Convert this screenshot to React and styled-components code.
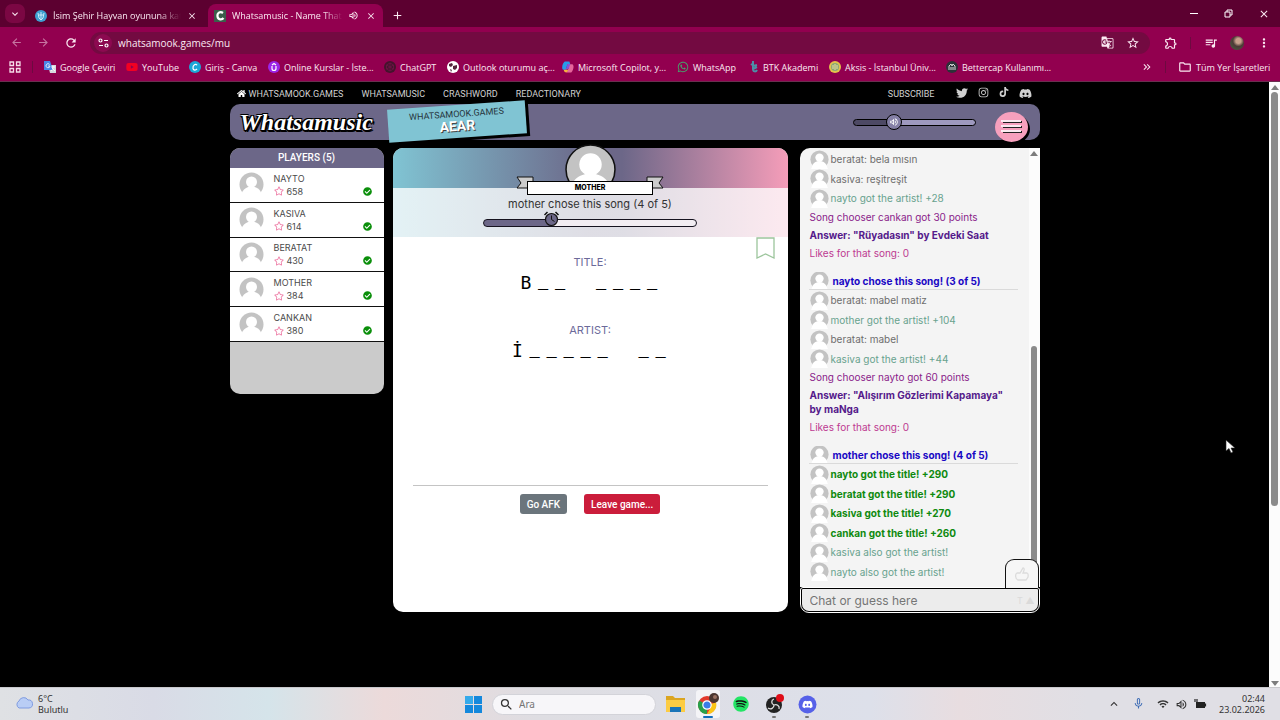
import React from "react";
import styled, { createGlobalStyle, css } from "styled-components";
import {
  MdArrowBack, MdArrowForward, MdRefresh, MdStarBorder, MdOutlineExtension, MdQueueMusic, MdMoreVert,
  MdClose, MdAdd, MdExpandMore, MdExpandLess, MdGTranslate, MdOutlineFolder, MdOutlineVolumeUp,
  MdWifi, MdMicNone, MdSearch, MdKeyboardDoubleArrowRight,
} from "react-icons/md";
import { FaHome, FaTwitter, FaInstagram, FaTiktok, FaDiscord, FaSpotify, FaWhatsapp, FaYoutube, FaRegStar, FaCheckCircle } from "react-icons/fa";

const GlobalStyle = createGlobalStyle`
  * { box-sizing: border-box; }
  body { margin: 0; background: #000; font-family: Inter, "Liberation Sans", sans-serif; }
  button, input { font: inherit; color: inherit; margin: 0; }
  button { border: 0; padding: 0; background: none; display: flex; align-items: center; justify-content: center; }
  a { color: inherit; text-decoration: none; }
  p, ul, h1, h2 { margin: 0; padding: 0; font: inherit; list-style: none; }
  svg { display: block; flex: none; }
`;

const Desktop = styled.div`
  min-height: 100vh;
  display: flex;
  flex-direction: column;
  overflow: hidden;
`;

/* ---------- browser ---------- */
const Chrome = styled.header`
  font-family: "Open Sans", "Noto Sans", sans-serif;
  color: #fbe9f2;
  background: #92004f;
  border-bottom: 1px solid #6a3050;
`;
const TabStrip = styled.div`
  display: flex;
  align-items: flex-end;
  height: 27px;
  padding-left: 5px;
  background: #5c0030;
`;
const TabMenu = styled.button`
  width: 20px;
  height: 19px;
  margin-bottom: 4px;
  border-radius: 7px;
  background: #7b0743;
`;
const Tab = styled.div`
  display: flex;
  align-items: center;
  gap: 4px;
  height: 23px;
  width: ${(p) => (p.$active ? 175 : 183)}px;
  padding: 0 ${(p) => (p.$active ? 6 : 10)}px;
  border-radius: 8px 8px 0 0;
  font-size: 9px;
  font-weight: 500;
  background: ${(p) => (p.$active ? "#92004f" : "transparent")};
`;
const TabTitle = styled.span`
  flex: 1;
  padding-left: 2px;
  overflow: hidden;
  white-space: nowrap;
  mask-image: linear-gradient(90deg, #000 82%, transparent);
`;
const NewTab = styled.button`
  width: 28px;
  height: 23px;
`;
const WindowButtons = styled.div`
  display: flex;
  gap: 22px;
  height: 27px;
  align-items: center;
  margin-left: auto;
  padding-right: 10px;
`;
const Toolbar = styled.div`
  display: flex;
  align-items: center;
  height: 31px;
  padding: 0 10px;
`;
const NavButtons = styled.div`
  display: flex;
  gap: 14px;
  width: 80px;
`;
const ToolButton = styled.button`
  width: 13px;
  opacity: ${(p) => (p.$dim ? 0.5 : 1)};
`;
const Address = styled.div`
  flex: 1;
  display: flex;
  align-items: center;
  gap: 6px;
  height: 22px;
  padding: 0 11px 0 4px;
  border-radius: 11px;
  background: #730a41;
`;
const PageActions = styled.div`
  display: flex;
  gap: 12px;
`;
const SiteInfo = styled.button`
  width: 18px;
  height: 18px;
  border-radius: 9px;
  background: #8c0a50;
`;
const Url = styled.input`
  flex: 1;
  border: 0;
  padding: 0;
  background: none;
  font-size: 10px;
  font-weight: 500;
  outline: 0;
`;
const ToolbarEnd = styled.div`
  display: flex;
  align-items: center;
  gap: 13px;
  padding-left: 14px;
`;
const Rule = styled.span`
  width: 1px;
  height: 12px;
  background: #6d0a40;
`;
const Photo = styled.span`
  width: 14px;
  height: 14px;
  border-radius: 50%;
  background: radial-gradient(circle at 60% 35%, #c9a08c 20%, #4c3a36 45%, #49553f 80%);
`;
const Bookmarks = styled.nav`
  display: flex;
  align-items: center;
  height: 23px;
  padding: 0 11px 5px 9px;
  font-size: 9px;
  font-weight: 500;
  white-space: nowrap;
`;
const BookmarkLead = styled.div`
  display: flex;
  align-items: center;
  gap: 11px;
  width: 35px;
`;
const Bookmark = styled.a`
  display: flex;
  align-items: center;
  gap: 4px;
  width: ${(p) => p.$w}px;
`;
const BookmarkEnd = styled.div`
  display: flex;
  align-items: center;
  gap: 12px;
  margin-left: auto;
`;

/* ---------- page ---------- */
const Viewport = styled.div`
  flex: 1;
  display: flex;
  background: #000;
`;
const PageScroll = styled.div`
  width: 11px;
  display: flex;
  flex-direction: column;
  align-items: center;
  justify-content: space-between;
  padding: 3px 0 1px;
  background: #fcfcfc;
`;
const PageThumb = styled.span`
  flex: 0 0 414px;
  width: 7px;
  margin: 2px 0 auto;
  border-radius: 4px;
  background: #8b8b8b;
`;
const Arrow = styled.span`
  border: 4px solid transparent;
  border-top-width: ${(p) => (p.$down ? 5 : 0)}px;
  border-bottom-width: ${(p) => (p.$down ? 0 : 5)}px;
  ${(p) => (p.$down ? "border-top-color" : "border-bottom-color")}: #7d7d7d;
`;
const Game = styled.main`
  width: 64%;
  max-width: 810px;
  min-width: 760px;
  margin: 0 auto;
`;
const SiteNav = styled.nav`
  display: flex;
  align-items: center;
  height: 22px;
  padding: 1px 8px 0 7px;
  gap: 18px;
  font: 400 9px Roboto, sans-serif;
  color: #d0d0d0;
`;
const HomeLink = styled.a`
  display: flex;
  align-items: center;
  gap: 3px;
`;
const Social = styled.div`
  display: flex;
  gap: 10px;
  padding-left: 3px;
`;
const Push = styled.a`
  margin-left: auto;
`;
const Banner = styled.header`
  display: flex;
  align-items: center;
  height: 36px;
  margin-bottom: 8px;
  padding: 0 12px 0 10px;
  border-radius: 10px;
  background: #6c6788;
`;
const Logo = styled.h1`
  width: 148px;
  font: italic 700 24px "Liberation Serif", serif;
  color: #fff;
  text-shadow: 1px 1px 0 #000, -1px -1px 0 #000, 1px -1px 0 #000, -1px 1px 0 #000, 2px 2px 0 #000, 0 2px 0 #000;
`;
const RoomCard = styled.div`
  width: 138px;
  height: 33px;
  margin-bottom: 2px;
  padding-top: 4px;
  text-align: center;
  background: #80c4d3;
  box-shadow: 3px 3px 0 #000;
  transform: rotate(-4deg);
  font: 400 9px/11px Roboto, sans-serif;
  color: #26343c;
`;
const RoomCode = styled.strong`
  display: block;
  font: 700 14px/13px Roboto, sans-serif;
  color: #fff;
  text-shadow: 1px 1px 0 #444;
`;
const Volume = styled.label`
  position: relative;
  display: flex;
  align-items: center;
  margin-left: auto;
  width: 123px;
`;
const VolumeInput = styled.input`
  appearance: none;
  width: 100%;
  height: 7px;
  border: 1px solid #000;
  border-radius: 4px;
  background: linear-gradient(90deg, #4d4964 33%, #9e99bf 33%);
  &::-webkit-slider-thumb {
    appearance: none;
    width: 16px;
    height: 16px;
    border: 1px solid #000;
    border-radius: 50%;
    background: #8580a6;
  }
`;
const VolumeGlyph = styled.span`
  position: absolute;
  left: 36px;
  pointer-events: none;
  color: #fff;
`;
const MenuButton = styled.button`
  width: 33px;
  height: 30px;
  margin: 9px 0 0 19px;
  border-radius: 50%;
  background: #f7a0bd;
  box-shadow: 2px 2px 0 #000;
`;
const Columns = styled.div`
  display: grid;
  grid-template-columns: 154px minmax(0, 1fr) 240px;
  align-items: start;
  column-gap: 12px;
`;
const Players = styled.section`
  min-height: 246px;
  border-radius: 10px;
  overflow: hidden;
  background: #cbcbcb;
`;
const PlayersTitle = styled.h2`
  height: 20px;
  background: #6c6788;
  color: #fff;
  text-align: center;
  font: 500 10px/20px Roboto, sans-serif;
`;
const PlayerList = styled.ul`
  display: flex;
  flex-direction: column;
  height: 174px;
`;
const Player = styled.li`
  flex: 1;
  display: flex;
  align-items: center;
  gap: 10px;
  padding: 0 12px 0 9px;
  border-bottom: 1px solid #111;
  background: #fff;
  font-size: 9px;
  color: #4a4a4a;
`;
const PlayerText = styled.div`
  flex: 1;
  line-height: 13px;
`;
const Score = styled.div`
  display: flex;
  align-items: center;
  justify-content: space-between;
`;
const ScoreValue = styled.span`
  display: flex;
  align-items: center;
  gap: 3px;
`;

/* ---------- round panel ---------- */
const Round = styled.section`
  min-height: 464px;
  margin-left: -3px;
  border-radius: 10px;
  background: #fff;
  text-align: center;
`;
const spectrum = css`linear-gradient(90deg, #80c4d3, #6c6788 50%, #6c6788 58%, #f59db9)`;
const RoundTop = styled.div`
  height: 89px;
  display: flex;
  flex-direction: column;
  align-items: center;
  border-radius: 10px 10px 0 0;
  background: linear-gradient(transparent 40px, rgba(255, 255, 255, 0.78) 40px), ${spectrum};
  font-size: 11px;
  color: #333;
`;
const Host = styled.div`
  position: relative;
  display: flex;
  flex-direction: column;
  align-items: center;
  width: 148px;
  margin-top: -4px;
`;
const HostPicture = styled.div`
  height: 37px;
  overflow: hidden;
`;
const Ribbon = styled.svg`
  position: absolute;
  left: 0;
  top: 32px;
`;
const HostName = styled.div`
  position: relative;
  width: 126px;
  height: 14px;
  border: 1px solid #000;
  background: #fff;
  color: #000;
  font: 800 7px/12px Inter, sans-serif;
`;
const Timer = styled.div`
  position: relative;
  width: 214px;
  height: 8px;
  margin-top: 8px;
  border: 1px solid #16131f;
  border-radius: 4px;
  background: linear-gradient(90deg, #6c6788 32%, #f2edf2 32%);
`;
const Clock = styled.svg`
  position: absolute;
  left: 59px;
  top: -9px;
`;
const HostCaption = styled.p`
  margin-top: 2px;
  line-height: 14px;
`;
const Answer = styled.div`
  height: 68px;
`;
const Answers = styled.div`
  position: relative;
  padding-top: 17px;
  height: 249px;
  margin: 0 20px;
  border-bottom: 1px solid #c4c4c4;
`;
const Save = styled.button`
  position: absolute;
  right: -7px;
  top: 0;
`;
const AnswerLabel = styled.h2`
  font-size: 11px;
  line-height: 16px;
  color: #6c6a9a;
`;
const Letters = styled.div`
  display: flex;
  justify-content: center;
  margin-top: 3px;
  padding-right: 2px;
  font: 18px/20px "DejaVu Sans Mono", monospace;
  color: #000;
`;
const Cell = styled.span`
  width: ${(p) => (p.$gap ? 24 : 17)}px;
  ${(p) => p.$blank && "padding-top: 1px; font-family: 'Liberation Mono', monospace; font-size: 17px;"}
`;
const Actions = styled.div`
  display: flex;
  justify-content: center;
  gap: 17px;
  padding-top: 8px;
`;
const Action = styled.button`
  height: 20px;
  padding: 0 7px;
  border-radius: 3px;
  font: 500 10px Roboto, sans-serif;
  color: #fff;
  background: ${(p) => (p.$danger ? "#cb1d3b" : "#6b757c")};
`;

/* ---------- chat ---------- */
const Chat = styled.section`
  position: relative;
`;
const ChatLog = styled.div`
  display: flex;
  height: 439px;
  border-radius: 10px 0 0 0;
  overflow: hidden;
  background: #f4f4f4;
`;
const Messages = styled.div`
  flex: 1;
  padding: 1px 11px 0 9px;
  font-size: 10px;
  line-height: 14px;
`;
const tones = {
  chat: "#6e6e6e", artist: "#68a28e", title: "#0f8a0f", points: "#8a1c8a",
  answer: "#551a8b", likes: "#bd3a91", song: "#1a08c4",
};
const bold = ["title", "answer", "song"];
const Line = styled.p`
  color: ${(p) => tones[p.$tone]};
  font-weight: ${(p) => (bold.includes(p.$tone) ? 700 : 400)};
  padding: 2px 0 2px 1px;
`;
const UserLine = styled(Line)`
  display: flex;
  align-items: center;
  gap: 2px;
  height: 19px;
  padding: 0 0 0 1px;
  overflow: hidden;
  &:nth-child(odd) { height: 20px; }
`;
const SongLine = styled(UserLine)`
  && { height: 18px; }
  gap: 4px;
  margin-top: 10px;
  border-bottom: 1px solid #dadada;
`;
const ChatScroll = styled.div`
  width: 11px;
  display: flex;
  flex-direction: column;
  align-items: center;
  justify-content: space-between;
  padding-top: 3px;
  background: #fcfcfc;
`;
const ChatThumb = styled.span`
  width: 6px;
  height: 241px;
  border-radius: 3px 3px 0 0;
  background: #8b8b8b;
`;
const Like = styled.button`
  position: absolute;
  right: 1px;
  bottom: 25px;
  width: 34px;
  height: 29px;
  border: 1px solid #111;
  border-bottom: 0;
  border-radius: 9px 9px 0 0;
  background: #f6f6f6;
`;
const Compose = styled.div`
  display: flex;
  align-items: center;
  height: 26px;
  border: 1px solid #fff;
  border-radius: 3px 3px 9px 9px;
  background: #000;
  padding: 1px;
`;
const ComposeField = styled.label`
  flex: 1;
  display: flex;
  align-items: center;
  height: 22px;
  padding: 0 3px 0 8px;
  border-radius: 1px 1px 7px 7px;
  background: #ececec;
  font-size: 9px;
  color: #dadada;
`;
const ComposeInput = styled.input`
  flex: 1;
  min-width: 0;
  border: 0;
  padding: 0;
  outline: 0;
  background: none;
  font-size: 12px;
  &::placeholder { color: #757575; opacity: 1; }
`;

/* ---------- taskbar ---------- */
const Taskbar = styled.footer`
  display: grid;
  grid-template-columns: 1fr auto 1fr;
  align-items: center;
  height: 33px;
  padding: 0 15px;
  border-top: 1px solid #c9c9cd;
  background: linear-gradient(90deg, #dfe1e4, #d9dbe6 12%, #d5e4ea 21%, #ecdada 30%, #dedde2 42%, #dde0ea 68%, #e8dde0 75%, #e0dfe5 85%);
  font: 9px/11px "Noto Sans", sans-serif;
  color: #333;
`;
const Weather = styled.div`
  display: flex;
  gap: 5px;
`;
const Dock = styled.div`
  display: flex;
  align-items: center;
  gap: 9px;
`;
const Search = styled.label`
  display: flex;
  align-items: center;
  gap: 5px;
  width: 164px;
  height: 21px;
  margin: 0 -2px;
  padding: 0 6px;
  border-radius: 11px;
  background: #f7f6f9;
  border: 1px solid #d3d3d9;
`;
const SearchInput = styled.input`
  flex: 1;
  min-width: 0;
  border: 0;
  outline: 0;
  padding: 0;
  background: none;
  font-size: 10px;
`;
const DockButton = styled.button`
  position: relative;
  width: 24px;
  height: 28px;
  border-radius: 3px;
  background: ${(p) => (p.$active ? "#f4f4f7" : "none")};
`;
const Running = styled.span`
  position: absolute;
  bottom: 0;
  width: ${(p) => (p.$active ? 10 : 4)}px;
  height: 2px;
  border-radius: 1px;
  background: ${(p) => (p.$active ? "#0f6cbd" : "#777")};
`;
const Tray = styled.div`
  display: flex;
  align-items: center;
  justify-content: flex-end;
  gap: 6px;
  text-align: right;
`;
const TrayGap = styled.span`
  display: flex;
  gap: 11px;
  padding-right: 6px;
`;
const Time = styled.time`
  padding-left: 6px;
`;
const Cursor = styled.svg`
  position: absolute;
  left: 1225px;
  top: 439px;
`;

function Avatar({ size, ring }) {
  return (
    <svg width={size} height={size} viewBox="0 0 50 50">
      <circle cx="25" cy="25" r="24" fill="#c3c3c3" stroke={ring ? "#111" : "none"} strokeWidth="1.500" />
      <circle cx="25" cy="20" r="11" fill="#fff" />
      <path d="M3 50l4-11c3-6 10-10 18-10s15 4 18 10l4 11z" fill="#fff" />
    </svg>
  );
}

const Disc = ({ fill, children }) => (
  <svg width="12" height="12" viewBox="0 0 12 12"><circle cx="6" cy="6" r="6" fill={fill} />{children}</svg>
);

const bookmarks = [
  [82, "Google Çeviri", <svg width="12" height="12" viewBox="0 0 12 12"><path d="M4 4h8v8H6z" fill="#d6d9de" /><path d="M0 0h6l3 9H0z" fill="#4a86e8" /><path d="M5.600 3.500A2 2 0 1 0 6 5H4M7 6h4M9 5v1c0 2-1 3-2 4M8 7l3 3" fill="none" stroke="#fff" strokeWidth=".8" /></svg>],
  [63, "YouTube", <FaYoutube size={12} color="#f20022" />],
  [79, "Giriş - Canva", <Disc fill="#1ba8d8"><path d="M8 4.200C7 2 3.500 4 4 7.500c.5 2.200 3 1.800 4 .3" fill="none" stroke="#fff" strokeWidth="1.200" /></Disc>],
  [116, "Online Kurslar - İste...", <Disc fill="#9b25e8"><path d="M4 5v2.500a2 2 0 0 0 4 0V5M4 4l2-1.500L8 4" fill="none" stroke="#fff" strokeWidth="1.200" /></Disc>],
  [63, "ChatGPT", <Disc fill="#43142c"><path d="M6 2l3.500 2v4L6 10 2.500 8V4zM6 2v8M2.500 4l7 4M9.500 4l-7 4" fill="none" stroke="#75124a" strokeWidth=".7" /></Disc>],
  [115, "Outlook oturumu aç...", <Disc fill="#fff"><path d="M2 3l3-1 1 2-2 2-2-1zM6 5l4-1v3L8 9 6 8zM3 8l2 1-1 2z" fill="#54243c" /></Disc>],
  [115, "Microsoft Copilot, y...", <svg width="12" height="12" viewBox="0 0 13 12"><path d="M3 0h5l1 3H6L4 9H1C-1 7 1 1 3 0" fill="#279be8" /><path d="M6 3h5c3 1 1 7-1 9H5l2-4z" fill="#e5669b" /><path d="M4 9l2-6h3L7 8z" fill="#7d55e0" /><path d="M2 9h5l-2 3C3 12 2 11 2 9" fill="#f4b23e" /></svg>],
  [73, "WhatsApp", <FaWhatsapp size={12} color="#46a36c" />],
  [79, "BTK Akademi", <svg width="9" height="12" viewBox="0 0 9 12"><path d="M3 0v8c0 3 3 3 4 1M1 3l3 2M3 5l4-1M3 8l4-2" fill="none" stroke="#4c8fa8" strokeWidth="2" /></svg>],
  [117, "Aksis - İstanbul Üniv...", <Disc fill="#e3c34b"><circle cx="6" cy="6" r="4" fill="#87a877" /><path d="M4 4v4M6 3v6M8 4v4" stroke="#f3e19c" /></Disc>],
  [100, "Bettercap Kullanımı...", <Disc fill="#2c3138"><path d="M3 9V5l2-2 1 2 1-2 2 2v4M5 6v3M7 6v3" fill="none" stroke="#ddd" /></Disc>],
];

const players = [["NAYTO", 658], ["KASIVA", 614], ["BERATAT", 430], ["MOTHER", 384], ["CANKAN", 380]];

const log = [
  { users: [["chat", "beratat: bela mısın"], ["chat", "kasiva: reşitreşit"], ["artist", "nayto got the artist! +28"]] },
  { tone: "points", text: "Song chooser cankan got 30 points" },
  { tone: "answer", text: "Answer: \"Rüyadasın\" by Evdeki Saat" },
  { tone: "likes", text: "Likes for that song: 0" },
  { tone: "song", text: "nayto chose this song! (3 of 5)" },
  { users: [["chat", "beratat: mabel matiz"], ["artist", "mother got the artist! +104"], ["chat", "beratat: mabel"], ["artist", "kasiva got the artist! +44"]] },
  { tone: "points", text: "Song chooser nayto got 60 points" },
  { tone: "answer", text: "Answer: \"Alışırım Gözlerimi Kapamaya\" by maNga" },
  { tone: "likes", text: "Likes for that song: 0" },
  { tone: "song", text: "mother chose this song! (4 of 5)" },
  { users: [["title", "nayto got the title! +290"], ["title", "beratat got the title! +290"], ["title", "kasiva got the title! +270"], ["title", "cankan got the title! +260"], ["artist", "kasiva also got the artist!"], ["artist", "nayto also got the artist!"]] },
];

function Puzzle({ label, pattern }) {
  return (
    <Answer>
      <AnswerLabel>{label}</AnswerLabel>
      <Letters>
        {[...pattern].map((c, i) => <Cell key={i} $gap={c === " "} $blank={c === "_"}>{c}</Cell>)}
      </Letters>
    </Answer>
  );
}

function Browser() {
  return (
    <Chrome>
      <TabStrip>
        <TabMenu aria-label="Tabs"><MdExpandMore size={12} /></TabMenu>
        <Tab>
          <Disc fill="#3e9fd0"><path d="M3 3l1 5 2 2 2-2 1-5M6 2v8M4 5h4" fill="none" stroke="#d9f2ff" strokeWidth=".9" /></Disc>
          <TabTitle>İsim Şehir Hayvan oyununa kat</TabTitle>
          <ToolButton aria-label="Close tab"><MdClose size={10} /></ToolButton>
        </Tab>
        <Tab $active>
          <svg width="12" height="12" viewBox="0 0 12 12"><path d="M0 0h12v12H0z" fill="#3b5e4b" /><path d="M9 3C6 1 3 3 3.500 6.500 4 10 8 10 9.500 8" fill="none" stroke="#fff" strokeWidth="2.200" /></svg>
          <TabTitle>Whatsamusic - Name That</TabTitle>
          <ToolButton aria-label="Mute tab"><MdOutlineVolumeUp size={11} /></ToolButton>
          <ToolButton aria-label="Close tab"><MdClose size={10} /></ToolButton>
        </Tab>
        <NewTab aria-label="New tab"><MdAdd size={13} /></NewTab>
        <WindowButtons>
          <ToolButton aria-label="Minimize"><svg width="9" height="9" viewBox="0 0 9 9"><path d="M1 4.500h8" stroke="#fff" /></svg></ToolButton>
          <ToolButton aria-label="Restore"><svg width="9" height="9" viewBox="0 0 9 9"><path d="M1 3h5v5H1zM3 3V1h5v5H6" fill="none" stroke="#fff" /></svg></ToolButton>
          <ToolButton aria-label="Close"><MdClose size={12} /></ToolButton>
        </WindowButtons>
      </TabStrip>
      <Toolbar>
        <NavButtons>
          <ToolButton $dim aria-label="Back"><MdArrowBack size={13} /></ToolButton>
          <ToolButton $dim aria-label="Forward"><MdArrowForward size={13} /></ToolButton>
          <ToolButton aria-label="Reload"><MdRefresh size={14} /></ToolButton>
        </NavButtons>
        <Address>
          <SiteInfo aria-label="Site information">
            <svg width="11" height="10" viewBox="0 0 11 10" fill="none" stroke="#fff" strokeWidth="1.200"><circle cx="2.500" cy="2.500" r="1.500" /><path d="M6 2.500h4M1 7.500h4" /><circle cx="8.500" cy="7.500" r="1.500" /></svg>
          </SiteInfo>
          <Url aria-label="Address" defaultValue="whatsamook.games/mu" />
          <PageActions>
            <ToolButton aria-label="Translate"><MdGTranslate size={13} /></ToolButton>
            <ToolButton aria-label="Bookmark"><MdStarBorder size={14} /></ToolButton>
          </PageActions>
        </Address>
        <ToolbarEnd>
          <ToolButton aria-label="Extensions"><MdOutlineExtension size={14} /></ToolButton>
          <Rule />
          <ToolButton aria-label="Media"><MdQueueMusic size={14} /></ToolButton>
          <Photo />
          <ToolButton aria-label="More"><MdMoreVert size={14} /></ToolButton>
        </ToolbarEnd>
      </Toolbar>
      <Bookmarks>
        <BookmarkLead>
          <svg width="12" height="12" viewBox="0 0 12 12"><path d="M1 1h3.500v3.500H1zM7.500 1H11v3.500H7.500zM1 7.500h3.500V11H1zM7.500 7.500H11V11H7.500z" fill="none" stroke="#f6dce9" strokeWidth="1.300" /></svg>
          <Rule />
        </BookmarkLead>
        {bookmarks.map(([w, text, icon]) => <Bookmark href="#" key={text} $w={w}>{icon}{text}</Bookmark>)}
        <BookmarkEnd>
          <MdKeyboardDoubleArrowRight size={12} />
          <Rule />
          <Bookmark href="#" $w={91}><MdOutlineFolder size={14} />Tüm Yer İşaretleri</Bookmark>
        </BookmarkEnd>
      </Bookmarks>
    </Chrome>
  );
}

export default function App() {
  return (
    <Desktop>
      <GlobalStyle />
      <Browser />
      <Viewport>
        <Game>
          <SiteNav>
            <HomeLink href="#"><FaHome size={9} color="#fff" />WHATSAMOOK.GAMES</HomeLink>
            <a href="#">WHATSAMUSIC</a>
            <a href="#">CRASHWORD</a>
            <a href="#">REDACTIONARY</a>
            <Push href="#">SUBSCRIBE</Push>
            <Social>
              <FaTwitter size={12} /><FaInstagram size={11} /><FaTiktok size={10} /><FaDiscord size={13} />
            </Social>
          </SiteNav>
          <Banner>
            <Logo>Whatsamusic</Logo>
            <RoomCard>WHATSAMOOK.GAMES<RoomCode>AEAR</RoomCode></RoomCard>
            <Volume aria-label="Volume">
              <VolumeInput type="range" defaultValue="31" />
              <VolumeGlyph><MdOutlineVolumeUp size={10} /></VolumeGlyph>
            </Volume>
            <MenuButton aria-label="Menu">
              <svg width="21" height="16" viewBox="0 0 21 16" strokeWidth="2"><path d="M2 3h19M2 8h19M2 13h19" stroke="#222" /><path d="M0 2h20M0 7h20M0 12h20" stroke="#fbeaf0" /></svg>
            </MenuButton>
          </Banner>
          <Columns>
            <Players>
              <PlayersTitle>PLAYERS (5)</PlayersTitle>
              <PlayerList>
                {players.map(([name, score]) => (
                  <Player key={name}>
                    <Avatar size={25} />
                    <PlayerText>
                      {name}
                      <Score>
                        <ScoreValue><FaRegStar size={10} color="#ee7fa8" />{score}</ScoreValue>
                        <FaCheckCircle size={9} color="#0b8f0b" />
                      </Score>
                    </PlayerText>
                  </Player>
                ))}
              </PlayerList>
            </Players>
            <Round>
              <RoundTop>
                <Host>
                  <HostPicture><Avatar size={51} ring /></HostPicture>
                  <Ribbon width="148" height="15" viewBox="0 0 148 15" fill="#ccc" stroke="#111">
                    <path d="M1 1h16v11H1l4-5zM147 1h-16v11h16l-4-5z" />
                  </Ribbon>
                  <HostName>MOTHER</HostName>
                </Host>
                <HostCaption>mother chose this song (4 of 5)</HostCaption>
                <Timer role="progressbar" aria-label="Time" aria-valuenow={32}>
                  <Clock width="17" height="16" viewBox="0 0 17 16">
                    <path d="M1.500 4l3-3M12.500 1l3 3" stroke="#111" strokeWidth="1.500" />
                    <circle cx="8.500" cy="8.500" r="6" fill="#6c6788" stroke="#111" strokeWidth="1.200" />
                    <path d="M8.500 4.500v4l3 2" fill="none" stroke="#111" />
                  </Clock>
                </Timer>
              </RoundTop>
              <Answers>
                <Save aria-label="Save song">
                  <svg width="19" height="22" viewBox="0 0 19 22"><path d="M1 1h17v20l-8.500-4L1 21z" fill="none" stroke="#9cc59c" strokeWidth="1.300" /></svg>
                </Save>
                <Puzzle label="TITLE:" pattern="B__ ____" />
                <Puzzle label="ARTIST:" pattern="İ_____ __" />
              </Answers>
              <Actions>
                <Action>Go AFK</Action>
                <Action $danger>Leave game...</Action>
              </Actions>
            </Round>
            <Chat>
              <ChatLog>
                <Messages>
                  {log.map((m, i) => {
                    if (m.users) {
                      return (
                        <div key={i}>
                          {m.users.map(([tone, text]) => <UserLine key={text} $tone={tone}><Avatar size={19} />{text}</UserLine>)}
                        </div>
                      );
                    }
                    if (m.tone === "song") return <SongLine key={i} $tone="song"><Avatar size={19} />{m.text}</SongLine>;
                    return <Line key={i} $tone={m.tone}>{m.text}</Line>;
                  })}
                </Messages>
                <ChatScroll><Arrow /><ChatThumb /></ChatScroll>
              </ChatLog>
              <Like aria-label="Like">
                <svg width="16" height="16" viewBox="0 0 16 16"><path d="M3 7h3l3-5c2 0 1 3 0 5h4c2 1 1 3 1 4l-2 3H4C1 13 1 8 3 7z" fill="none" stroke="#dcdcdc" strokeWidth="1.300" /></svg>
              </Like>
              <Compose>
                <ComposeField><ComposeInput placeholder="Chat or guess here" />T ▲</ComposeField>
              </Compose>
            </Chat>
          </Columns>
        </Game>
        <PageScroll><Arrow /><PageThumb /><Arrow $down /></PageScroll>
      </Viewport>
      <Taskbar>
        <Weather>
          <svg width="18" height="20" viewBox="0 0 18 20"><path d="M4 15a4 4 0 0 1 0-7 5 5 0 0 1 9-1 4 4 0 0 1 1 8z" fill="#b9cdf5" stroke="#7f9be0" /></svg>
          <div>6°C<br />Bulutlu</div>
        </Weather>
        <Dock>
          <DockButton aria-label="Start">
            <svg width="17" height="17" viewBox="0 0 17 17"><path d="M0 0h8v8H0zM9 0h8v8H9zM0 9h8v8H0zM9 9h8v8H9z" fill="#1488dc" /><path d="M0 0h8v8H0z" fill="#35aaea" /></svg>
          </DockButton>
          <Search><MdSearch size={15} /><SearchInput aria-label="Search" placeholder="Ara" /></Search>
          <DockButton aria-label="Files">
            <svg width="19" height="18" viewBox="0 0 19 18"><path d="M0 1h7l2 2h10v14H0z" fill="#dba520" /><path d="M0 5h19v12H0z" fill="#fccc43" /><path d="M4 12h11v5H4z" fill="#1a74b8" /></svg>
          </DockButton>
          <DockButton $active aria-label="Chrome">
            <svg width="22" height="22" viewBox="0 0 22 22">
              <circle cx="10" cy="12" r="9" fill="#e33b2e" />
              <path d="M10 12L2.200 7.500A9 9 0 0 0 10 21z" fill="#27a14a" />
              <path d="M10 12l9-2.500A9 9 0 0 1 10 21l4-7z" fill="#fbc516" />
              <circle cx="10" cy="12" r="4.200" fill="#3b7de8" stroke="#fff" strokeWidth="1.200" />
              <circle cx="17" cy="5" r="5" fill="#4b3731" /><circle cx="18" cy="4" r="2" fill="#9a7263" />
            </svg>
            <Running $active />
          </DockButton>
          <DockButton aria-label="Spotify">
            <svg width="16" height="16" viewBox="0 0 16 16"><circle cx="8" cy="8" r="7" fill="#111" /><FaSpotify size={16} color="#23e565" /></svg>
          </DockButton>
          <DockButton aria-label="OBS">
            <svg width="19" height="20" viewBox="0 0 19 20"><circle cx="9" cy="11" r="8" fill="#222" /><path d="M9 11c-3-1-3-5 0-6M9 11c3-1 6 1 5 4M9 11c0 3-3 5-6 3" fill="none" stroke="#ddd" strokeWidth="1.300" /><circle cx="15" cy="4" r="4" fill="#df0d18" /></svg>
            <Running />
          </DockButton>
          <DockButton aria-label="Discord">
            <svg width="19" height="19" viewBox="0 0 19 19"><circle cx="9.500" cy="9.500" r="9" fill="#5661e8" /><g transform="translate(4 4)"><FaDiscord size={11} color="#fff" /></g></svg>
            <Running />
          </DockButton>
        </Dock>
        <Tray>
          <TrayGap><MdExpandLess size={14} /><MdMicNone size={13} color="#3d6cb5" /></TrayGap>
          <MdWifi size={12} /><MdOutlineVolumeUp size={13} />
          <svg width="13" height="12" viewBox="0 0 13 12"><path d="M2 4h9v6H2z" fill="#222" /><path d="M11.500 5.500v3M1 1v3M3 1v3" stroke="#222" strokeWidth="1.200" /></svg>
          <Time>02:44<br />23.02.2026</Time>
        </Tray>
      </Taskbar>
      <Cursor width="11" height="15" viewBox="0 0 11 15"><path d="M1 1v11l3-2.500L6 14l2-1-2-4h4z" fill="#fff" stroke="#222" strokeWidth=".6" /></Cursor>
    </Desktop>
  );
}
